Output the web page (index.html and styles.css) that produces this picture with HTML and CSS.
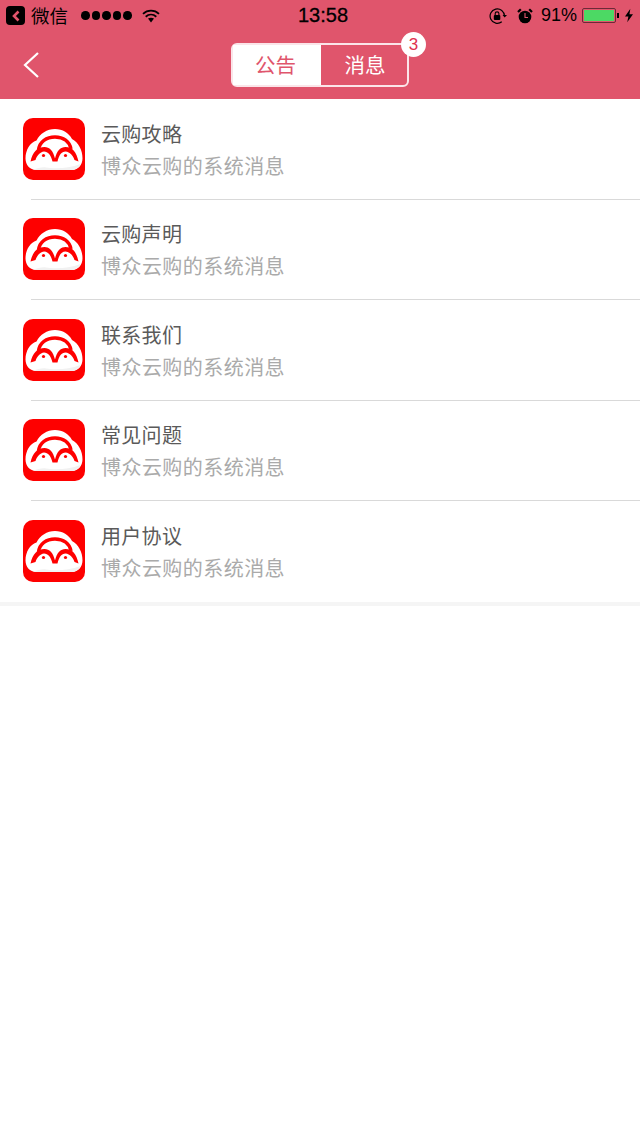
FILE: index.html
```html
<!DOCTYPE html>
<html lang="zh-CN">
<head>
<meta charset="UTF-8">
<meta name="viewport" content="width=device-width, initial-scale=1.0">
<title>消息</title>
<link rel="stylesheet" href="styles.css">
</head>
<body>

<svg class="defs" width="0" height="0">
    <symbol id="logo" viewBox="0 0 62 62">
        <rect width="62" height="62" rx="10" fill="#fe0000"/>
        <path d="M13 52C7 52 2.500 47 2.500 40.500C2.500 32 7 24.500 13.500 22.500C17 15.500 24 11 32 11C39.500 11 46 15 49 21C55.500 24.500 59.500 32 59.500 40.500C59.500 47 55 52 49 52Z" fill="#fff"/>
        <path d="M13 52C12 52 11 51.800 10 51.500C15 50.500 19 48.500 23 49.500C32 51 46 50.500 57.500 46C56 49.500 53 52 49 52Z" fill="#f1f1f1"/>
        <path d="M15.500 32C16.500 23.500 23.500 19 32 19C40.500 19 46.500 23.500 48 31" fill="none" stroke="#fe0000" stroke-width="3.400"/>
        <path d="M7.500 43.500C9.500 34 14.500 29 21.500 29C26.500 29 30 32.500 32 40.500C34 32.500 37.500 29 42.500 29C49.500 29 53.500 34 55.500 43.500L51.500 42C50 37.500 47 34 42.500 33.500C38.500 33.500 36 37 34.500 43.500H29.500C28 37 25 33.500 21 33.500C17 34 14 37.500 12.500 42Z" fill="#fe0000"/>
        <circle cx="20.500" cy="37.500" r="1.600" fill="#fe0000"/>
        <circle cx="42.500" cy="37.500" r="1.600" fill="#fe0000"/>
    </symbol>
</svg>

<!-- 顶部 -->
<div class="header">
    <div class="status-bar">
        <div class="status-left">
            <span class="wx-back">
                <svg width="10" height="12" viewBox="0 0 10 12"><path d="M7.500 1.500L3 6L7.500 10.500" fill="none" stroke="#e0556c" stroke-width="2.600"/></svg>
            </span>
            <span class="wx-name">微信</span>
            <span class="signal"><i></i><i></i><i></i><i></i><i></i></span>
            <svg class="wifi" width="18" height="14" viewBox="0 0 18 14">
                <path d="M1 4.800C5.500 .6 12.500 .6 17 4.800" fill="none" stroke="#000" stroke-width="1.800"/>
                <path d="M3.700 7.700C6.800 5 11.200 5 14.300 7.700" fill="none" stroke="#000" stroke-width="1.800"/>
                <path d="M6 9.600C8 8.300 10 8.300 12 9.600L9 13.500Z" fill="#000"/>
            </svg>
        </div>
        <div class="status-time">13:58</div>
        <div class="status-right">
            <svg width="19" height="16" viewBox="0 0 19 16">
                <path d="M15.500 8A7.200 7.200 0 1 0 12.800 13.700" fill="none" stroke="#000" stroke-width="1.200"/>
                <path d="M13.500 7L15.700 9.500L18 7" fill="#000"/>
                <rect x="4.800" y="7" width="6.500" height="5" rx="1" fill="#000"/>
                <path d="M6.200 7V5.500C6.200 3.300 9.900 3.300 9.900 5.500V7" fill="none" stroke="#000" stroke-width="1.100"/>
            </svg>
            <svg class="alarm" width="16" height="16" viewBox="0 0 16 16">
                <circle cx="8" cy="9" r="6.300" fill="#000"/>
                <path d="M1 4L3.800 1.200M15 4L12.200 1.200" stroke="#000" stroke-width="2.200"/>
                <path d="M8 5V9.500H11" fill="none" stroke="#e0556c" stroke-width="1.100"/>
            </svg>
            <span class="percent">91%</span>
            <span class="battery"><span class="battery-fill"></span></span>
            <span class="battery-tip"></span>
            <svg class="bolt" width="8" height="15" viewBox="0 0 9 15"><path d="M6 0L0 8.500H3.800L2.500 15L9 6H5Z" fill="#000"/></svg>
        </div>
    </div>
    <div class="nav-bar">
        <svg class="nav-back" width="18" height="28" viewBox="0 0 18 28"><path d="M16 2L3 14L16 26" fill="none" stroke="#fff" stroke-width="2.200"/></svg>
        <div class="tabs">
            <div class="tab tab-on">公告</div>
            <div class="tab tab-off">消息</div>
            <span class="badge">3</span>
        </div>
    </div>
</div>

<!-- 列表 -->
<div class="list">
    <div class="row">
        <svg class="row-logo"><use href="#logo"/></svg>
        <div class="row-text">
            <div class="row-title">云购攻略</div>
            <div class="row-sub">博众云购的系统消息</div>
        </div>
    </div>
    <div class="row">
        <svg class="row-logo"><use href="#logo"/></svg>
        <div class="row-text">
            <div class="row-title">云购声明</div>
            <div class="row-sub">博众云购的系统消息</div>
        </div>
    </div>
    <div class="row">
        <svg class="row-logo"><use href="#logo"/></svg>
        <div class="row-text">
            <div class="row-title">联系我们</div>
            <div class="row-sub">博众云购的系统消息</div>
        </div>
    </div>
    <div class="row">
        <svg class="row-logo"><use href="#logo"/></svg>
        <div class="row-text">
            <div class="row-title">常见问题</div>
            <div class="row-sub">博众云购的系统消息</div>
        </div>
    </div>
    <div class="row">
        <svg class="row-logo"><use href="#logo"/></svg>
        <div class="row-text">
            <div class="row-title">用户协议</div>
            <div class="row-sub">博众云购的系统消息</div>
        </div>
    </div>
</div>
<div class="list-end"></div>

</body>
</html>
```

FILE: styles.css
```css
body {
    margin: 0;
    font-family: "Noto Sans CJK SC", "Liberation Sans", sans-serif;
    background-color: #fff;
}
.defs {
    display: block;
}
.header {
    height: 99px;
    background-color: #e0556c;
}
.status-bar {
    height: 31px;
    display: grid;
    grid-template-columns: 1fr auto 1fr;
    align-items: center;
    color: #000;
}
.status-left {
    display: flex;
    align-items: center;
    padding-left: 6px;
}
.wx-back {
    width: 19px;
    height: 19px;
    background-color: #000;
    border-radius: 4px;
    display: flex;
    align-items: center;
    justify-content: center;
}
.wx-name {
    margin-left: 6px;
    margin-top: -2px;
    font-size: 18.500px;
    line-height: 24px;
}
.signal {
    margin-left: 13px;
    display: flex;
    gap: 2px;
}
.signal i {
    width: 8.500px;
    height: 8.500px;
    border-radius: 50%;
    background-color: #000;
}
.wifi {
    margin-left: 10px;
}
.status-time {
    margin-left: 6px;
    font-family: "Liberation Sans", sans-serif;
    font-size: 20px;
    line-height: 31px;
    -webkit-text-stroke: 0.3px #000;
}
.status-right {
    display: flex;
    align-items: center;
    justify-content: flex-end;
    padding-right: 7px;
}
.alarm {
    margin-left: 9px;
}
.percent {
    margin-left: 8px;
    font-family: "Liberation Sans", sans-serif;
    font-size: 18px;
}
.battery {
    margin-left: 5px;
    width: 30px;
    height: 11px;
    padding: 1px;
    border: 1px solid #6b2a38;
    border-radius: 2px;
    display: block;
}
.battery-fill {
    display: block;
    width: 100%;
    height: 100%;
    background-color: #4cd964;
}
.battery-tip {
    width: 2px;
    height: 5px;
    margin-left: 1px;
    background-color: #000;
}
.bolt {
    margin-left: 6px;
}
.nav-bar {
    height: 68px;
    position: relative;
    display: flex;
    justify-content: center;
    padding-top: 12px;
    box-sizing: border-box;
}
.nav-back {
    position: absolute;
    left: 22px;
    top: 20px;
}
.tabs {
    position: relative;
    display: flex;
    width: 178px;
    height: 44px;
    box-sizing: border-box;
    border: 2px solid rgba(255, 255, 255, 0.85);
    border-radius: 6px;
}
.tab {
    text-align: center;
    font-size: 20.500px;
    line-height: 38px;
    color: #fff;
    box-sizing: border-box;
}
.tab-on {
    width: 88px;
    padding-right: 3px;
    background-color: #fff;
    color: #e0556c;
}
.tab-off {
    flex: 1;
    padding-left: 2px;
}
.badge {
    position: absolute;
    right: -19px;
    top: -13px;
    width: 25px;
    height: 25px;
    border-radius: 50%;
    background-color: #fff;
    color: #e0304f;
    font-family: "Liberation Sans", sans-serif;
    font-size: 17px;
    line-height: 25px;
    text-align: center;
}
.row {
    height: 100.400px;
    box-sizing: border-box;
    position: relative;
    display: flex;
    align-items: center;
    padding-left: 23px;
    padding-bottom: 0.400px;
}
.row::after {
    content: "";
    position: absolute;
    left: 31px;
    right: 0;
    bottom: -0.600px;
    height: 1px;
    background-color: #d9d9d9;
}
.row:last-child::after {
    display: none;
}
.row-logo {
    width: 62px;
    height: 62px;
    flex: none;
}
.row-text {
    margin-left: 16px;
    padding-top: 2px;
}
.row-title {
    font-size: 20px;
    line-height: 32px;
    letter-spacing: 0.3px;
    color: #5a5a5a;
}
.row-sub {
    font-size: 20px;
    line-height: 32px;
    letter-spacing: 0.450px;
    color: #aaa;
}
.list-end {
    height: 4px;
    margin-top: 1px;
    background-color: #f5f5f5;
}
```
